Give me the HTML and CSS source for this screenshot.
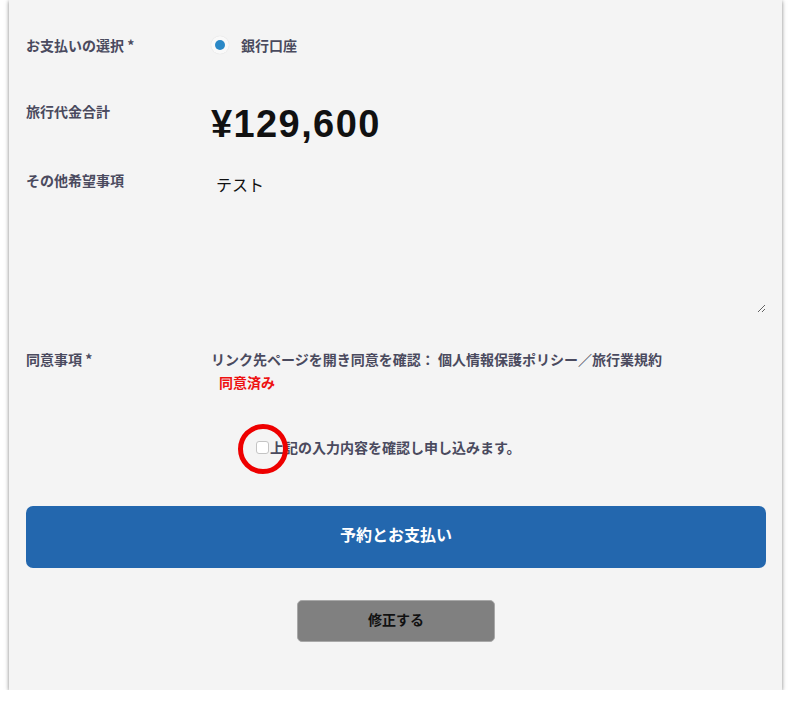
FILE: index.html
```html
<!DOCTYPE html>
<html lang="ja">
<head>
<meta charset="utf-8">
<title>予約確認</title>
<link rel="stylesheet" href="styles.css">
</head>
<body>
<div class="card">
  <div class="row row-pay">
    <div class="label">お支払いの選択 *</div>
    <div class="value">
      <label class="radio-line"><span class="radio"><span class="dot"></span></span><span class="radio-text">銀行口座</span></label>
    </div>
  </div>
  <div class="row row-total">
    <div class="label">旅行代金合計</div>
    <div class="value"><div class="price">¥129,600</div></div>
  </div>
  <div class="row row-note">
    <div class="label">その他希望事項</div>
    <div class="value"><textarea class="note">テスト</textarea></div>
  </div>
  <div class="row row-agree">
    <div class="label">同意事項 *</div>
    <div class="value">
      <div class="agree-text">リンク先ページを開き同意を確認： 個人情報保護ポリシー／旅行業規約</div>
      <div class="agreed">同意済み</div>
    </div>
  </div>
  <div class="row row-check">
    <div class="label"></div>
    <div class="value">
      <label class="check-line"><span class="check-wrap"><input type="checkbox" class="check"><span class="ring"></span></span><span class="check-text">上記の入力内容を確認し申し込みます。</span></label>
    </div>
  </div>
  <button class="btn-primary">予約とお支払い</button>
  <div class="btn-row"><button class="btn-secondary">修正する</button></div>
</div>
</body>
</html>
```
FILE: styles.css
```css
html, body {
  margin: 0;
  padding: 0;
  background: #ffffff;
}
body {
  font-family: "Noto Sans CJK JP", "Noto Sans", sans-serif;
  color: #4a4a5e;
}
.card {
  width: 773px;
  height: 690px;
  box-sizing: border-box;
  margin-left: 9px;
  background: #f4f4f4;
  box-shadow: 0 1px 4px rgba(0, 0, 0, 0.5);
  padding: 35px 16px 0 17px;
}
.row {
  display: grid;
  grid-template-columns: 185px 1fr;
  align-items: start;
}
.label {
  font-size: 14px;
  font-weight: 700;
  line-height: 20px;
  color: #4a4a5e;
}
.row-total { margin-top: 46px; }
.row-note { margin-top: 25px; }
.row-agree { margin-top: 36px; }
.row-check { margin-top: 45px; }

.radio-line {
  display: flex;
  align-items: center;
  height: 20px;
  gap: 12px;
}
.radio {
  width: 18px;
  height: 18px;
  border-radius: 50%;
  background: #f9f9f9;
  box-shadow: 0 0 1px rgba(0, 0, 0, 0.15);
  display: flex;
  align-items: center;
  justify-content: center;
}
.dot {
  width: 10px;
  height: 10px;
  border-radius: 50%;
  background: #2a88c6;
}
.radio-text {
  font-size: 14px;
  font-weight: 700;
  color: #4a4a5e;
}
.price {
  font-family: "Liberation Sans", Arial, sans-serif;
  font-size: 38px;
  font-weight: 700;
  line-height: 44px;
  letter-spacing: 1.4px;
  color: #111111;
  padding-top: 1px;
  height: 44px;
  box-sizing: border-box;
}
.note {
  display: block;
  width: 100%;
  height: 144px;
  box-sizing: border-box;
  margin-top: -1px;
  padding: 4px 5px;
  border: none;
  background: transparent;
  font-family: "Noto Sans CJK JP", sans-serif;
  font-size: 16px;
  line-height: 22px;
  color: #111111;
  resize: vertical;
  outline: none;
}
.agree-text {
  font-size: 14px;
  font-weight: 700;
  line-height: 20px;
  color: #4a4a5e;
}
.agreed {
  margin-top: 3px;
  padding-left: 8px;
  font-size: 14px;
  font-weight: 700;
  line-height: 20px;
  color: #ee1111;
}
.check-line {
  display: flex;
  align-items: center;
  height: 20px;
  padding-left: 45px;
}
.check-wrap {
  position: relative;
  width: 13px;
  height: 13px;
  margin-right: 1px;
}
.check {
  appearance: none;
  -webkit-appearance: none;
  display: block;
  margin: 0;
  width: 13px;
  height: 13px;
  box-sizing: border-box;
  border: 1px solid #c4c4c4;
  border-radius: 3px;
  background: #ffffff;
}
.ring {
  position: absolute;
  left: -18px;
  top: -17px;
  width: 50px;
  height: 50px;
  box-sizing: border-box;
  border: 5px solid #ee0000;
  border-radius: 50%;
  pointer-events: none;
}
.check-text {
  font-size: 14px;
  font-weight: 700;
  color: #4a4a5e;
}
.btn-primary {
  display: block;
  width: 100%;
  height: 62px;
  margin-top: 49px;
  padding: 0 0 6px;
  border: none;
  border-radius: 7px;
  background: #2367ae;
  color: #ffffff;
  font-family: "Noto Sans CJK JP", sans-serif;
  font-size: 16px;
  font-weight: 700;
}
.btn-row {
  display: flex;
  justify-content: center;
  margin-top: 32px;
}
.btn-secondary {
  width: 198px;
  height: 42px;
  padding: 0 0 4px;
  border: 1px solid #a8a8a8;
  border-radius: 5px;
  background: #808080;
  color: #111111;
  font-family: "Noto Sans CJK JP", sans-serif;
  font-size: 14px;
  font-weight: 700;
}
```
